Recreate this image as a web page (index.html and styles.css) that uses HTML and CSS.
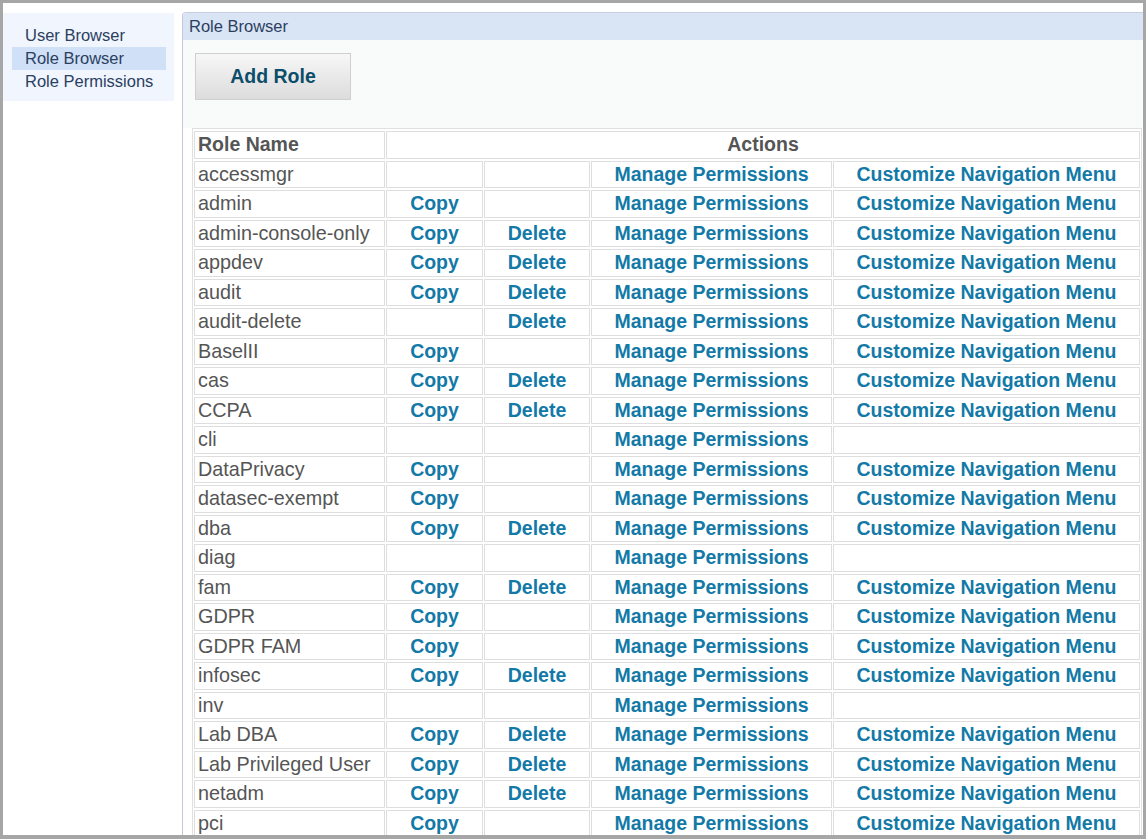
FILE: index.html
```html
<!DOCTYPE html>
<html>
<head>
<meta charset="utf-8">
<title>Role Browser</title>
<link rel="stylesheet" href="styles.css">
</head>
<body>
<div class="frame">
  <nav class="sidebar">
    <a class="nav-item">User Browser</a>
    <a class="nav-item active">Role Browser</a>
    <a class="nav-item">Role Permissions</a>
  </nav>
  <section class="panel">
    <header class="panel-head">Role Browser</header>
    <div class="toolbar">
      <button class="btn">Add Role</button>
    </div>
    <table class="roles">
      <colgroup>
        <col class="c-name"><col class="c-copy"><col class="c-del"><col class="c-perm"><col class="c-menu">
      </colgroup>
      <thead>
        <tr><th class="name">Role Name</th><th colspan="4">Actions</th></tr>
      </thead>
      <tbody>
        <tr><td class="name">accessmgr</td><td></td><td></td><td><a>Manage Permissions</a></td><td><a>Customize Navigation Menu</a></td></tr>
        <tr><td class="name">admin</td><td><a>Copy</a></td><td></td><td><a>Manage Permissions</a></td><td><a>Customize Navigation Menu</a></td></tr>
        <tr><td class="name">admin-console-only</td><td><a>Copy</a></td><td><a>Delete</a></td><td><a>Manage Permissions</a></td><td><a>Customize Navigation Menu</a></td></tr>
        <tr><td class="name">appdev</td><td><a>Copy</a></td><td><a>Delete</a></td><td><a>Manage Permissions</a></td><td><a>Customize Navigation Menu</a></td></tr>
        <tr><td class="name">audit</td><td><a>Copy</a></td><td><a>Delete</a></td><td><a>Manage Permissions</a></td><td><a>Customize Navigation Menu</a></td></tr>
        <tr><td class="name">audit-delete</td><td></td><td><a>Delete</a></td><td><a>Manage Permissions</a></td><td><a>Customize Navigation Menu</a></td></tr>
        <tr><td class="name">BaselII</td><td><a>Copy</a></td><td></td><td><a>Manage Permissions</a></td><td><a>Customize Navigation Menu</a></td></tr>
        <tr><td class="name">cas</td><td><a>Copy</a></td><td><a>Delete</a></td><td><a>Manage Permissions</a></td><td><a>Customize Navigation Menu</a></td></tr>
        <tr><td class="name">CCPA</td><td><a>Copy</a></td><td><a>Delete</a></td><td><a>Manage Permissions</a></td><td><a>Customize Navigation Menu</a></td></tr>
        <tr><td class="name">cli</td><td></td><td></td><td><a>Manage Permissions</a></td><td></td></tr>
        <tr><td class="name">DataPrivacy</td><td><a>Copy</a></td><td></td><td><a>Manage Permissions</a></td><td><a>Customize Navigation Menu</a></td></tr>
        <tr><td class="name">datasec-exempt</td><td><a>Copy</a></td><td></td><td><a>Manage Permissions</a></td><td><a>Customize Navigation Menu</a></td></tr>
        <tr><td class="name">dba</td><td><a>Copy</a></td><td><a>Delete</a></td><td><a>Manage Permissions</a></td><td><a>Customize Navigation Menu</a></td></tr>
        <tr><td class="name">diag</td><td></td><td></td><td><a>Manage Permissions</a></td><td></td></tr>
        <tr><td class="name">fam</td><td><a>Copy</a></td><td><a>Delete</a></td><td><a>Manage Permissions</a></td><td><a>Customize Navigation Menu</a></td></tr>
        <tr><td class="name">GDPR</td><td><a>Copy</a></td><td></td><td><a>Manage Permissions</a></td><td><a>Customize Navigation Menu</a></td></tr>
        <tr><td class="name">GDPR FAM</td><td><a>Copy</a></td><td></td><td><a>Manage Permissions</a></td><td><a>Customize Navigation Menu</a></td></tr>
        <tr><td class="name">infosec</td><td><a>Copy</a></td><td><a>Delete</a></td><td><a>Manage Permissions</a></td><td><a>Customize Navigation Menu</a></td></tr>
        <tr><td class="name">inv</td><td></td><td></td><td><a>Manage Permissions</a></td><td></td></tr>
        <tr><td class="name">Lab DBA</td><td><a>Copy</a></td><td><a>Delete</a></td><td><a>Manage Permissions</a></td><td><a>Customize Navigation Menu</a></td></tr>
        <tr><td class="name">Lab Privileged User</td><td><a>Copy</a></td><td><a>Delete</a></td><td><a>Manage Permissions</a></td><td><a>Customize Navigation Menu</a></td></tr>
        <tr><td class="name">netadm</td><td><a>Copy</a></td><td><a>Delete</a></td><td><a>Manage Permissions</a></td><td><a>Customize Navigation Menu</a></td></tr>
        <tr><td class="name">pci</td><td><a>Copy</a></td><td></td><td><a>Manage Permissions</a></td><td><a>Customize Navigation Menu</a></td></tr>
      </tbody>
    </table>
  </section>
</div>
</body>
</html>
```

FILE: styles.css
```css
html, body {
  margin: 0;
  padding: 0;
}
body {
  font-family: "Liberation Sans", Arial, sans-serif;
  background: #fff;
}
.frame {
  box-sizing: border-box;
  width: 1146px;
  height: 839px;
  border: 3px solid #a6a6a6;
  border-bottom-width: 4px;
  overflow: hidden;
  display: flex;
  align-items: flex-start;
  background: #fff;
}
.sidebar {
  margin-top: 10px;
  width: 171px;
  flex: none;
  box-sizing: border-box;
  padding: 11px 8px 8px 9px;
  background: #f0f5fe;
  display: flex;
  flex-direction: column;
}
.nav-item {
  display: block;
  height: 23px;
  line-height: 23px;
  padding-left: 13px;
  font-size: 16.5px;
  color: #2b3f5f;
  white-space: nowrap;
}
.nav-item.active {
  background: #cfe0f7;
}
.panel {
  flex: 1;
  margin-top: 9px;
  margin-left: 8px;
  border-left: 1px solid #c6c7df;
  border-top: 1px solid #c7cde2;
  border-top-left-radius: 4px;
  min-height: 900px;
  background: #fff;
}
.panel-head {
  height: 27px;
  line-height: 27px;
  padding-left: 6px;
  background: #d9e4f5;
  font-size: 16.5px;
  color: #2b3f5f;
  border-top-left-radius: 3px;
}
.toolbar {
  height: 88px;
  box-sizing: border-box;
  padding: 13px 0 0 12px;
  background: #f9fafa;
}
.btn {
  width: 156px;
  height: 47px;
  border: 1px solid #cfcfcf;
  background: linear-gradient(#f7f7f7, #dcdcdc);
  font-family: "Liberation Sans", Arial, sans-serif;
  font-weight: bold;
  font-size: 19.5px;
  color: #0c4d69;
  padding: 0;
  margin: 0;
}
.roles {
  margin: 0 0 0 9px;
  width: 950px;
  table-layout: fixed;
  border: 1px solid #e0e0e0;
  border-spacing: 1px 2px;
  font-size: 19.5px;
}
.c-name { width: 191px; }
.c-copy { width: 97px; }
.c-del { width: 106px; }
.c-perm { width: 241px; }
.c-menu { width: 307px; }
.roles th, .roles td {
  border: 1px solid #dedede;
  padding: 2px 3px;
  line-height: 21.5px;
  height: 21.5px;
  text-align: center;
  white-space: nowrap;
  overflow: hidden;
  color: #555;
}
.roles th {
  font-weight: bold;
}
.roles td.name {
  text-align: left;
  font-size: 19.8px;
}
.roles th.name {
  text-align: left;
}
.roles a {
  font-weight: bold;
  color: #1379a7;
}
```
